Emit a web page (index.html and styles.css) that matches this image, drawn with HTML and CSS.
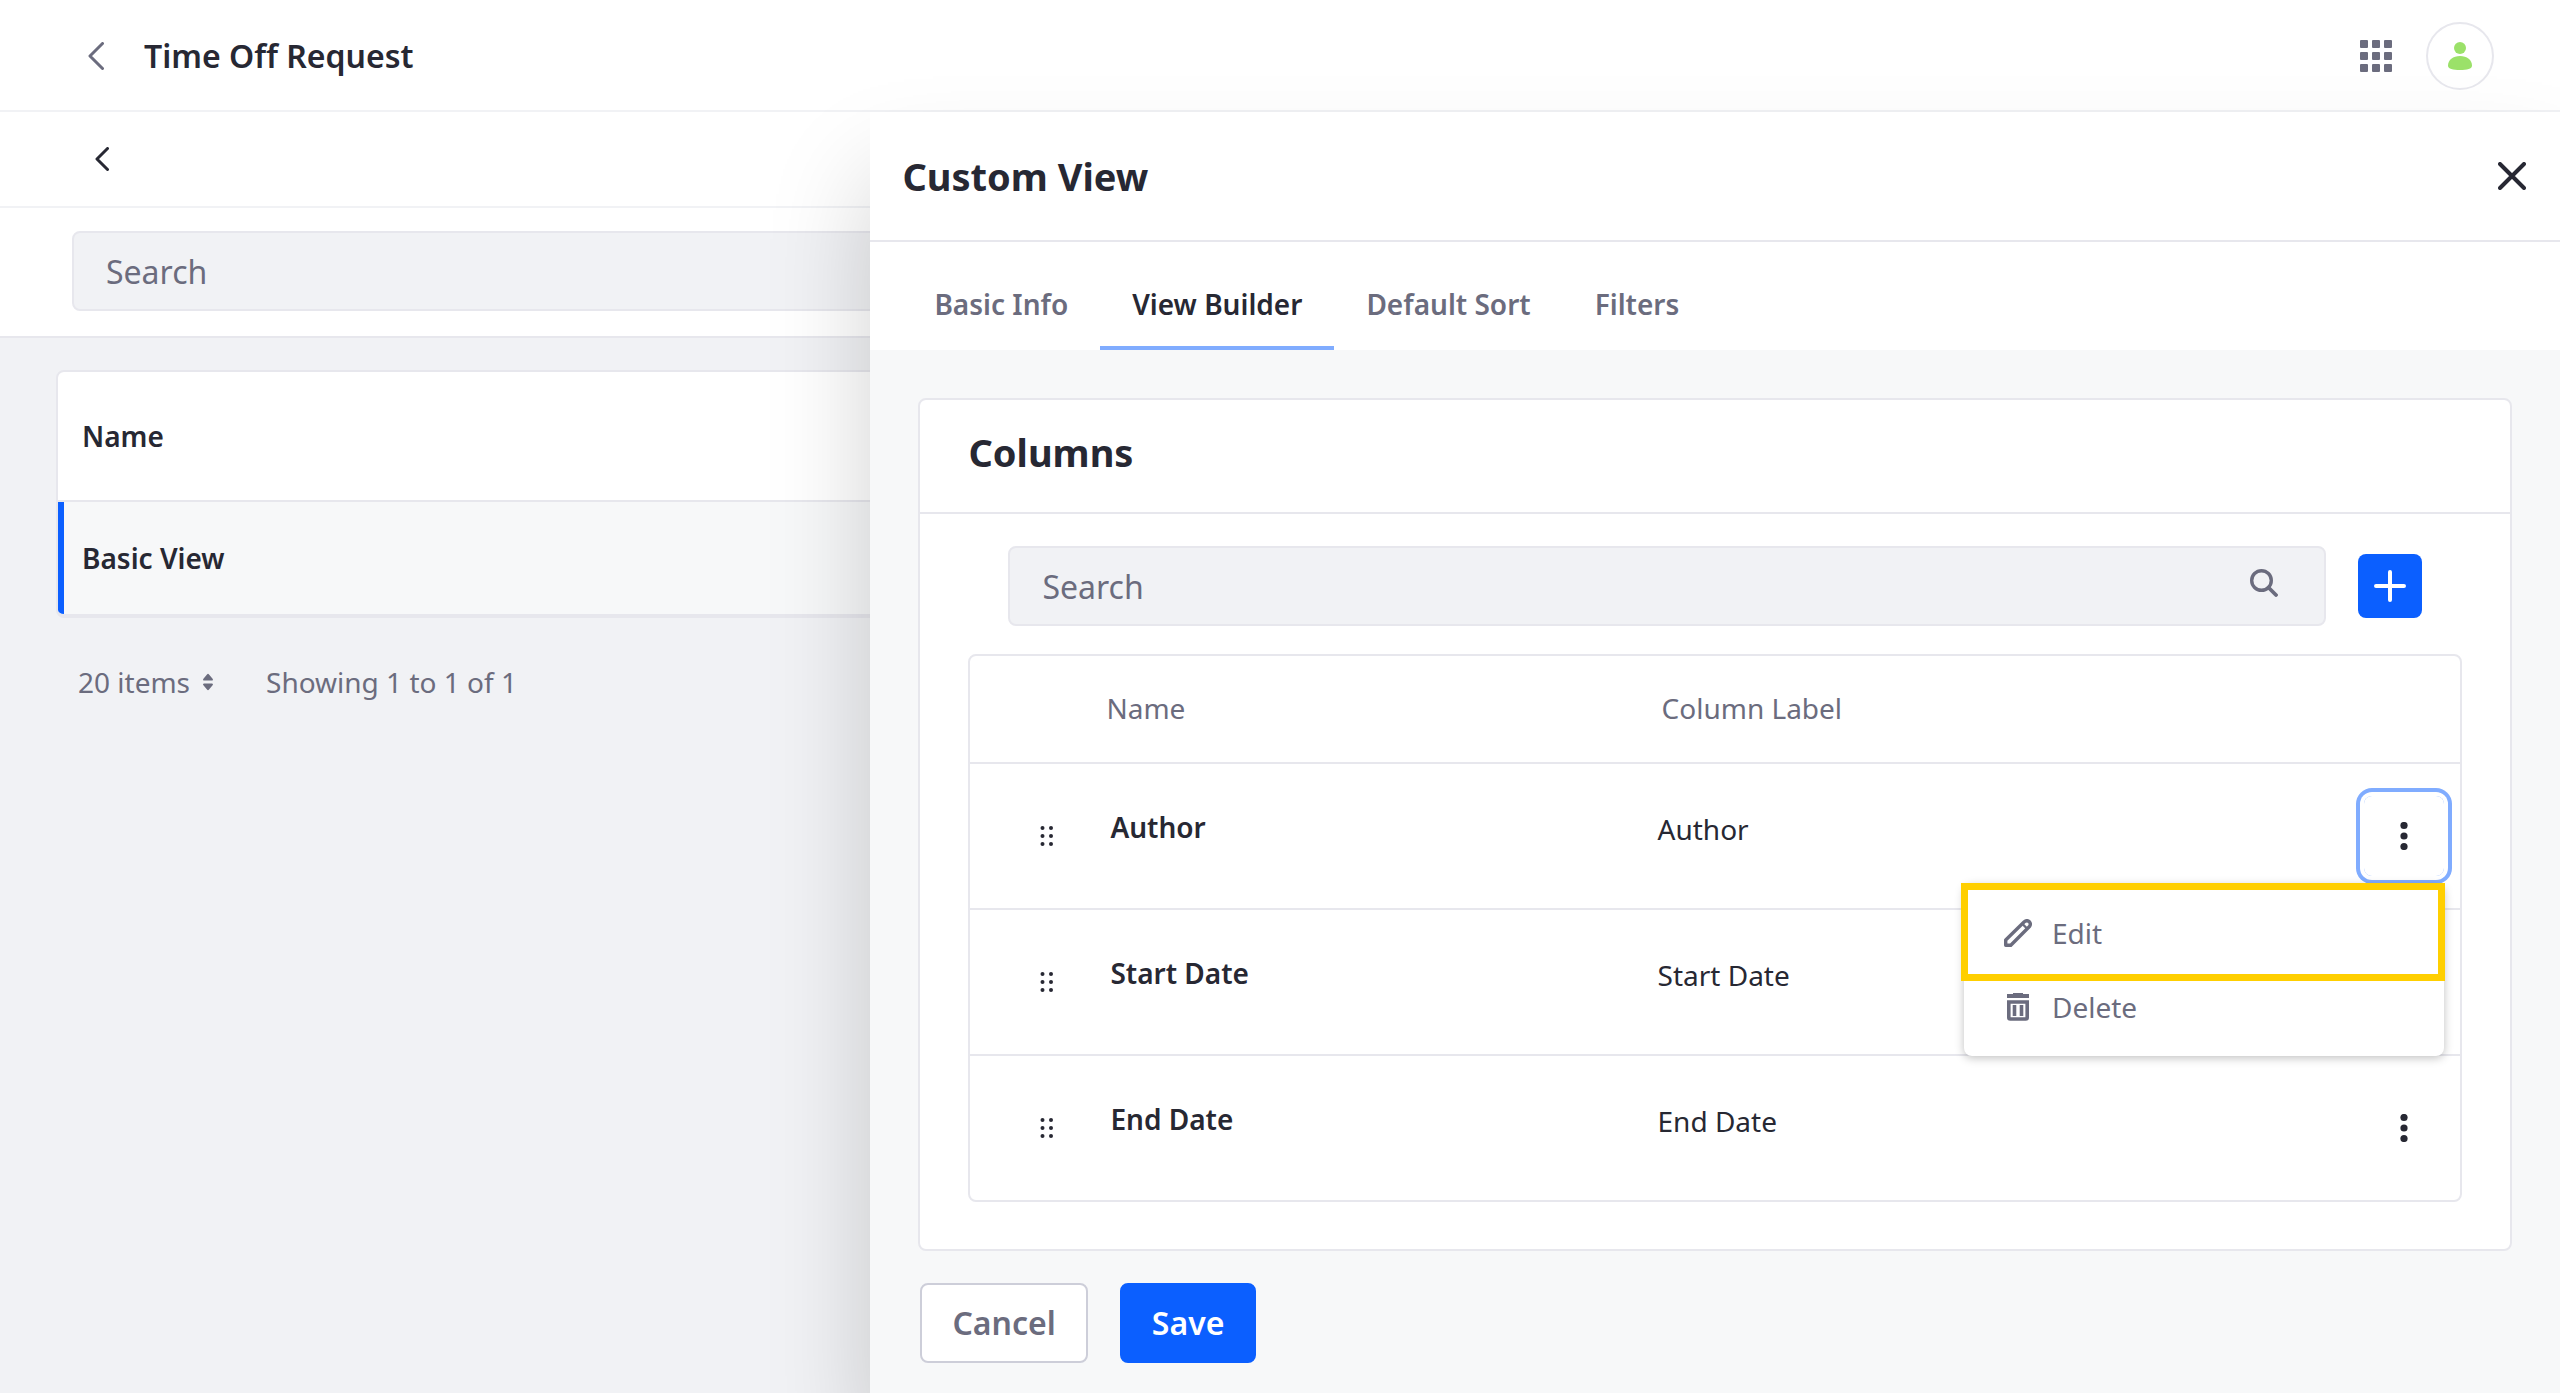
FILE: index.html
```html
<!DOCTYPE html>
<html lang="en">
<head>
<meta charset="utf-8">
<title>Time Off Request</title>
<link rel="stylesheet" href="styles.css">
</head>
<body>
<header class="topbar">
  <a class="icon-link muted" href="#" aria-label="Back"><svg width="16" height="28" viewBox="0 0 16 28"><path d="M14.500 1.500 2 14l12.500 12.500" fill="none" stroke="currentColor" stroke-width="3" stroke-linecap="round" stroke-linejoin="round"/></svg></a>
  <h1 class="topbar-title">Time Off Request</h1>
  <button class="icon-button muted" type="button" aria-label="Applications"><svg width="32" height="32" viewBox="0 0 32 32" fill="currentColor"><rect width="8" height="8" rx="1"/><rect x="12" width="8" height="8" rx="1"/><rect x="24" width="8" height="8" rx="1"/><rect y="12" width="8" height="8" rx="1"/><rect x="12" y="12" width="8" height="8" rx="1"/><rect x="24" y="12" width="8" height="8" rx="1"/><rect y="24" width="8" height="8" rx="1"/><rect x="12" y="24" width="8" height="8" rx="1"/><rect x="24" y="24" width="8" height="8" rx="1"/></svg></button>
  <button class="avatar" type="button" aria-label="User profile"><svg width="32" height="32" viewBox="0 0 32 32" fill="currentColor"><circle cx="16" cy="8" r="6"/><path d="M16 16C9 16 4 20 4 25.500C4 29 9 30 16 30S28 29 28 25.500C28 20 23 16 16 16Z"/></svg></button>
</header>
<main class="stage">
  <section class="views">
    <div class="subbar"><a class="icon-link" href="#" aria-label="Back to objects"><svg width="14" height="24" viewBox="0 0 14 24"><path d="M12.500 1.500 2 12l10.500 10.500" fill="none" stroke="currentColor" stroke-width="3" stroke-linecap="round" stroke-linejoin="round"/></svg></a></div>
    <div class="management"><input class="field" type="search" placeholder="Search" aria-label="Search views"></div>
    <div class="views-body">
      <table class="views-table">
        <thead><tr><th scope="col">Name</th></tr></thead>
        <tbody><tr><td>Basic View</td></tr></tbody>
      </table>
      <div class="pagination">
        <button class="page-size" type="button">20 items <svg width="12" height="18" viewBox="0 0 12 18" fill="currentColor"><path d="M5 1.500Q6 0 7 1.500L10.800 6Q11.500 7.500 10 7.500H2Q.5 7.500 1.200 6ZM5 16.500Q6 18 7 16.500L10.800 12Q11.500 10.500 10 10.500H2Q.5 10.500 1.200 12Z"/></svg></button>
        <span>Showing 1 to 1 of 1</span>
      </div>
    </div>
  </section>
  <section class="panel" aria-labelledby="panel-title">
    <div class="panel-header">
      <h2 class="title" id="panel-title">Custom View</h2>
      <button class="icon-button" type="button" aria-label="Close"><svg width="28" height="28" viewBox="0 0 28 28"><path d="M2 2 26 26M26 2 2 26" stroke="currentColor" stroke-width="4" stroke-linecap="round"/></svg></button>
    </div>
    <nav class="tabs">
      <a class="tab" href="#">Basic Info</a>
      <a class="tab tab-active" href="#" aria-current="page">View Builder</a>
      <a class="tab" href="#">Default Sort</a>
      <a class="tab" href="#">Filters</a>
    </nav>
    <div class="panel-body">
      <div class="card">
        <h3 class="title card-header">Columns</h3>
        <div class="card-body">
          <div class="toolbar">
            <div class="search">
              <input class="field" type="search" placeholder="Search" aria-label="Search columns">
              <button class="icon-button muted search-button" type="button" aria-label="Search"><svg width="28" height="28" viewBox="0 0 28 28" fill="none" stroke="currentColor" stroke-width="3.400"><circle cx="11.500" cy="11.500" r="9.800"/><path d="M18.500 18.500 26 26" stroke-width="3.800" stroke-linecap="round"/></svg></button>
            </div>
            <button class="add" type="button" aria-label="Add column"><svg width="32" height="32" viewBox="0 0 32 32"><path d="M16 2V30M2 16H30" stroke="currentColor" stroke-width="4" stroke-linecap="round"/></svg></button>
          </div>
          <table class="columns">
            <thead><tr><td class="col-handle"></td><th class="col-name" scope="col">Name</th><th class="col-label" scope="col">Column Label</th><td class="col-actions"></td></tr></thead>
            <tbody>
              <tr>
                <td class="handle"><svg width="14" height="20" viewBox="0 0 14 20" fill="currentColor"><circle cx="2.500" cy="2" r="2"/><circle cx="11" cy="2" r="2"/><circle cx="2.500" cy="10" r="2"/><circle cx="11" cy="10" r="2"/><circle cx="2.500" cy="18" r="2"/><circle cx="11" cy="18" r="2"/></svg></td>
                <td class="name">Author</td><td class="label">Author</td>
                <td class="actions"><div class="dropdown">
                  <button class="kebab kebab-open" type="button" aria-label="Author actions" aria-expanded="true"><svg width="8" height="28" viewBox="0 0 8 28" fill="currentColor"><circle cx="4" cy="3.500" r="3.600"/><circle cx="4" cy="14" r="3.600"/><circle cx="4" cy="24.500" r="3.600"/></svg></button>
                  <div class="menu">
                    <button class="menu-item" type="button"><svg width="28" height="28" viewBox="0 0 28 28" fill="none" stroke="currentColor" stroke-width="3.400" stroke-linejoin="round"><path d="M1.700 26.300V21L20.300 2.800Q23 .6 25.400 2.800Q27.400 5.200 25.200 7.800L6.800 26.300Z"/><path d="M18.500 5 23 9.500" stroke-width="2.400"/></svg>Edit</button>
                    <button class="menu-item" type="button"><svg width="28" height="28" viewBox="0 0 28 28" fill="none" stroke="currentColor"><path d="M3 3H25" stroke-width="4"/><path d="M9 1H19" stroke-width="2"/><path d="M4.800 9H23.200V24.500Q23.200 26 21.700 26H6.300Q4.800 26 4.800 24.500Z" stroke-width="3.600"/><path d="M10.500 12V23M17.500 12V23" stroke-width="3.600"/></svg>Delete</button>
                    <div class="highlight"></div>
                  </div>
                </div></td>
              </tr>
              <tr>
                <td class="handle"><svg width="14" height="20" viewBox="0 0 14 20" fill="currentColor"><circle cx="2.500" cy="2" r="2"/><circle cx="11" cy="2" r="2"/><circle cx="2.500" cy="10" r="2"/><circle cx="11" cy="10" r="2"/><circle cx="2.500" cy="18" r="2"/><circle cx="11" cy="18" r="2"/></svg></td>
                <td class="name">Start Date</td><td class="label">Start Date</td>
                <td class="actions"></td>
              </tr>
              <tr>
                <td class="handle"><svg width="14" height="20" viewBox="0 0 14 20" fill="currentColor"><circle cx="2.500" cy="2" r="2"/><circle cx="11" cy="2" r="2"/><circle cx="2.500" cy="10" r="2"/><circle cx="11" cy="10" r="2"/><circle cx="2.500" cy="18" r="2"/><circle cx="11" cy="18" r="2"/></svg></td>
                <td class="name">End Date</td><td class="label">End Date</td>
                <td class="actions"><button class="kebab" type="button" aria-label="End Date actions"><svg width="8" height="28" viewBox="0 0 8 28" fill="currentColor"><circle cx="4" cy="3.500" r="3.600"/><circle cx="4" cy="14" r="3.600"/><circle cx="4" cy="24.500" r="3.600"/></svg></button></td>
              </tr>
            </tbody>
          </table>
        </div>
      </div>
      <div class="footer">
        <button class="button" type="button">Cancel</button>
        <button class="button button-primary" type="submit">Save</button>
      </div>
    </div>
  </section>
</main>
</body>
</html>
```
FILE: styles.css
```css
* { box-sizing: border-box; }

body {
  margin: 0;
  min-height: 100vh;
  display: flex;
  flex-direction: column;
  background: #f1f2f5;
  color: #272833;
  font: 400 28px/40px "Noto Sans", sans-serif;
}

h1, h2, h3 { margin: 0; }
a { color: inherit; text-decoration: none; }
button, input { font: inherit; color: inherit; }
button { margin: 0; padding: 0; border: 0; background: none; cursor: pointer; }
svg { display: block; flex: none; }

.muted { color: #6b6c7e; }
.icon-link, .icon-button { display: flex; }

.topbar {
  display: flex;
  align-items: center;
  height: 112px;
  padding: 2px 66px 0 88px;
  background: #fff;
  border-bottom: 2px solid #f1f2f5;
}
.topbar-title {
  flex: 1;
  margin-left: 40px;
  font-size: 32px;
  line-height: 48px;
  font-weight: 600;
}
.avatar {
  display: flex;
  align-items: center;
  justify-content: center;
  width: 68px;
  height: 68px;
  margin-left: 34px;
  border: 2px solid #e7e7ed;
  border-radius: 50%;
  background: #fff;
  color: #9be169;
}

.stage { flex: 1; display: grid; }
.views, .panel { grid-area: 1 / 1; }

.subbar {
  display: flex;
  align-items: center;
  height: 96px;
  padding: 0 95px;
  background: #fff;
  border-bottom: 2px solid #f1f2f5;
}
.management {
  padding: 23px 72px 25px;
  background: #fff;
  border-bottom: 2px solid #e7e7ed;
}
.field {
  display: block;
  width: 100%;
  height: 80px;
  padding: 0 32px;
  border: 2px solid #e7e7ed;
  border-radius: 8px;
  background: #f1f2f5;
  font-size: 32px;
  outline: 0;
  appearance: none;
}
.field::placeholder { color: #6b6c7e; opacity: 1; }

.views-body { padding: 32px 56px; }
.views-table {
  width: 100%;
  border: 2px solid #e7e7ed;
  border-bottom-width: 4px;
  border-radius: 8px;
  border-spacing: 0;
  background: #fff;
  overflow: hidden;
  font-weight: 600;
}
.views-table th {
  height: 130px;
  padding: 0 24px;
  border-bottom: 2px solid #e7e7ed;
  text-align: left;
  font-weight: inherit;
}
.views-table td {
  height: 112px;
  padding: 0 18px;
  border-left: 6px solid #0b5fff;
  background: #f7f8f9;
}
.pagination {
  display: flex;
  gap: 52px;
  padding: 44px 22px;
  color: #6b6c7e;
}
.page-size { display: flex; align-items: center; gap: 12px; }

.panel {
  justify-self: end;
  display: flex;
  flex-direction: column;
  width: 66%;
  background: #f7f8f9;
  box-shadow: 0 64px 96px rgba(0, 0, 0, 0.18);
}
.panel-header {
  display: flex;
  align-items: center;
  justify-content: space-between;
  height: 130px;
  padding: 0 34px 0 32px;
  background: #fff;
  border-bottom: 2px solid #e7e7ed;
}
.title { font-size: 38px; line-height: 56px; font-weight: 700; }

.tabs {
  display: flex;
  padding: 0 32px;
  background: #fff;
}
.tab {
  padding: 42px 32px 22px;
  border-bottom: 4px solid transparent;
  color: #6b6c7e;
  font-weight: 600;
}
.tab-active { border-color: #80acff; color: #272833; }

.panel-body { padding: 48px 48px 28px; }
.card {
  border: 2px solid #e7e7ed;
  border-radius: 8px;
  background: #fff;
}
.card-header { padding: 24px 48px 32px; border-bottom: 2px solid #e7e7ed; }
.card-body { padding: 32px 48px 47px; }
.toolbar {
  display: flex;
  align-items: center;
  gap: 32px;
  padding: 0 40px;
}
.search { position: relative; flex: 1; }
.search-button { position: absolute; top: 23px; right: 48px; }
.add {
  display: flex;
  align-items: center;
  justify-content: center;
  width: 64px;
  height: 64px;
  border-radius: 8px;
  background: #0b5fff;
  color: #fff;
}

.columns {
  width: 100%;
  margin-top: 28px;
  border: 2px solid #e7e7ed;
  border-radius: 8px;
  border-spacing: 0;
  table-layout: fixed;
}
.columns td, .columns th { padding: 0; text-align: left; }
.columns thead td, .columns th {
  height: 108px;
  border-bottom: 2px solid #e7e7ed;
  color: #6b6c7e;
  font-weight: 400;
}
.columns tbody td { height: 146px; border-bottom: 2px solid #e7e7ed; }
.columns tbody tr:last-child td { height: 144px; border-bottom: 0; }
.col-handle { width: 110px; }
.col-name { width: 37%; }
.col-actions { width: 96px; }
.columns .col-name { padding: 0 0 2px 26px; }
.columns .col-label { padding: 0 0 2px 30px; }
.columns .handle { padding-left: 70px; }
.columns .name { padding: 0 0 18px 30px; font-weight: 600; }
.columns .label { padding: 0 0 14px 26px; }

.dropdown { position: relative; width: 80px; }
.kebab {
  display: flex;
  align-items: center;
  justify-content: center;
  width: 80px;
  height: 80px;
  border-radius: 8px;
}
.kebab-open { box-shadow: 0 0 0 4px #fff, 0 0 0 8px #80acff; }
.menu {
  position: absolute;
  z-index: 1;
  top: 88px;
  right: 0;
  width: 480px;
  padding: 12px 0;
  border-radius: 8px;
  background: #fff;
  box-shadow: 0 2px 10px rgba(0, 0, 0, 0.25);
}
.menu-item {
  display: flex;
  align-items: center;
  gap: 20px;
  width: 100%;
  height: 74px;
  padding: 0 40px;
  color: #6b6c7e;
}
.highlight {
  position: absolute;
  inset: -1px -1px 75px -3px;
  border: 7px solid #ffcf00;
  pointer-events: none;
}

.footer { display: flex; gap: 32px; padding: 32px 2px 0; }
.button {
  height: 80px;
  padding: 0 30px;
  border: 2px solid #cdced9;
  border-radius: 8px;
  background: #fff;
  color: #6b6c7e;
  font-size: 32px;
  font-weight: 600;
}
.button-primary { border-color: #0b5fff; background: #0b5fff; color: #fff; }
```
